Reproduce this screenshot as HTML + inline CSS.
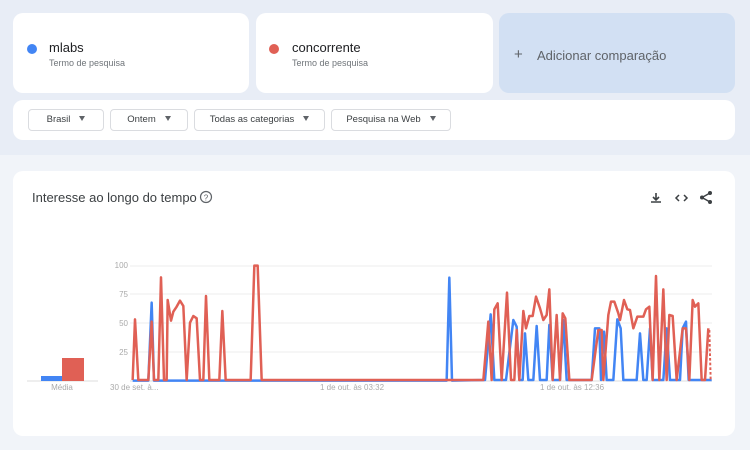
<!DOCTYPE html>
<html><head><meta charset="utf-8"><style>
*{margin:0;padding:0;box-sizing:border-box}
body{width:750px;height:450px;overflow:hidden;background:#f1f4f9;font-family:"Liberation Sans",sans-serif;position:relative}
.top{position:absolute;left:0;top:0;width:750px;height:155px;background:#e8edf6}
.card{position:absolute;background:#fff;border-radius:10px}
.dot{position:absolute;width:10px;height:10px;border-radius:50%}
.t{position:absolute;font-size:13px;color:#202124}
.s{position:absolute;font-size:9px;color:#70757a}
.btn{position:absolute;top:109px;height:22px;border:1px solid #dadce0;border-radius:4px;font-size:9.5px;color:#3c4043;line-height:20px;text-align:center}
.btn b{display:inline-block;width:0;height:0;border-left:3.5px solid transparent;border-right:3.5px solid transparent;border-top:5px solid #5f6368;margin-left:9px;vertical-align:1px}
.lab{position:absolute;font-size:8px;color:#9aa0a6}
</style></head><body>
<div class="top"></div>
<div class="card" style="left:13px;top:13px;width:236px;height:80px"></div>
<div class="dot" style="left:27px;top:44px;background:#4285f4"></div>
<div class="t" style="left:49px;top:40px">mlabs</div>
<div class="s" style="left:49px;top:58px">Termo de pesquisa</div>
<div class="card" style="left:256px;top:13px;width:237px;height:80px"></div>
<div class="dot" style="left:269px;top:44px;background:#e06055"></div>
<div class="t" style="left:292px;top:40px">concorrente</div>
<div class="s" style="left:292px;top:58px">Termo de pesquisa</div>
<div class="card" style="left:499px;top:13px;width:236px;height:80px;background:#d2e0f3"></div>
<div class="t" style="left:514px;top:46px;color:#5f6368;font-size:15px">+</div>
<div class="t" style="left:537px;top:48px;color:#5f6368">Adicionar comparação</div>
<div class="card" style="left:13px;top:100px;width:722px;height:40px"></div>
<div class="btn" style="left:28px;width:76px">Brasil<b></b></div>
<div class="btn" style="left:110px;width:78px">Ontem<b></b></div>
<div class="btn" style="left:194px;width:131px">Todas as categorias<b></b></div>
<div class="btn" style="left:331px;width:120px">Pesquisa na Web<b></b></div>
<div class="card" style="left:13px;top:171px;width:722px;height:265px"></div>
<div class="t" style="left:32px;top:190px;font-size:13px;color:#3c4043">Interesse ao longo do tempo</div>
<svg style="position:absolute;left:0;top:0" width="750" height="450">
<circle cx="206" cy="197" r="5.5" fill="none" stroke="#5f6368" stroke-width="1.2"/>
<text x="206" y="200.5" font-size="8" text-anchor="middle" fill="#5f6368" font-family="Liberation Sans">?</text>
<path d="M656 193v7M653 197l3 3 3-3M651 202h10" stroke="#3c4043" stroke-width="1.6" fill="none"/>
<path d="M679 195l-3 3 3 3M684 195l3 3-3 3" stroke="#3c4043" stroke-width="1.5" fill="none"/>
<path d="M710 193l-8 4.5 8 4.5" stroke="#3c4043" stroke-width="1.4" fill="none"/>
<circle cx="710" cy="193" r="2" fill="#3c4043"/><circle cx="702" cy="197.5" r="2" fill="#3c4043"/><circle cx="710" cy="202" r="2" fill="#3c4043"/>
<g stroke="#ececec" stroke-width="1">
<line x1="130" y1="266" x2="712" y2="266"/><line x1="130" y1="294" x2="712" y2="294"/><line x1="130" y1="323" x2="712" y2="323"/><line x1="130" y1="352" x2="712" y2="352"/>
</g>
<line x1="130" y1="381" x2="712" y2="381" stroke="#ddd"/>
<line x1="27" y1="381" x2="98" y2="381" stroke="#ddd"/>
<rect x="41" y="376" width="22" height="5" fill="#4285f4"/>
<rect x="62" y="358" width="22" height="23" fill="#e06055"/>
<g font-family="Liberation Sans" font-size="8" fill="#aaa">
<text x="128" y="268" text-anchor="end">100</text><text x="128" y="297" text-anchor="end">75</text><text x="128" y="326" text-anchor="end">50</text><text x="128" y="355" text-anchor="end">25</text>
<text x="62" y="390" text-anchor="middle">Média</text>
<text x="110" y="390">30 de set. à...</text>
<text x="352" y="390" text-anchor="middle">1 de out. às 03:32</text>
<text x="572" y="390" text-anchor="middle">1 de out. às 12:36</text>
</g>
<g transform="translate(0,250) scale(0.33333)" fill="none" stroke-width="7.5" stroke-linejoin="round">
<polyline stroke="#4285f4" points="398,392 445,392 455,158 462,392 1200,392"/>
<polyline stroke="#e06055" points="398,390 405,208 415,390 445,390 455,215 462,390 475,390 483,82 492,390 500,390 503,150 513,212 520,185 530,170 540,152 550,168 560,390 570,218 580,198 590,205 600,390 610,390 618,138 628,390 658,390 667,183 677,390 752,390 763,47 773,47 785,390 1200,390"/>
</g>
<g transform="translate(400,250) scale(0.33333)" fill="none" stroke-width="7.5" stroke-linejoin="round">
<polyline stroke="#4285f4" points="0,392 140,392 148,83 156,392 255,390 272,193 283,390 318,390 340,210 350,230 358,390 368,390 375,250 385,390 400,390 410,228 420,390 440,390 448,225 458,390 480,390 490,210 500,390 575,390 585,235 598,235 603,390 612,245 620,390 640,390 652,208 662,235 670,390 710,390 720,250 730,390 740,390 750,235 758,390 790,390 800,235 810,390 840,390 848,235 858,215 866,390 935,390"/>
<polyline stroke="#e06055" points="0,390 250,390 265,215 275,390 283,178 293,160 305,390 321,128 333,390 343,390 350,240 358,390 370,183 378,235 388,198 398,198 408,140 420,175 430,210 440,195 448,118 458,390 470,195 480,390 488,190 496,205 508,390 575,390 595,240 605,240 610,390 625,195 633,155 643,155 655,190 660,210 672,150 682,178 690,180 700,235 712,200 730,200 738,178 748,170 758,390 768,78 778,390 790,118 800,390 808,195 818,198 830,390 848,235 858,235 868,390 878,150 885,170 895,160 905,390 915,390 925,235"/>
<line x1="928" y1="240" x2="932" y2="390" stroke="#e06055" stroke-width="6" stroke-dasharray="8 6"/>
</g>
</svg>
</body></html>
